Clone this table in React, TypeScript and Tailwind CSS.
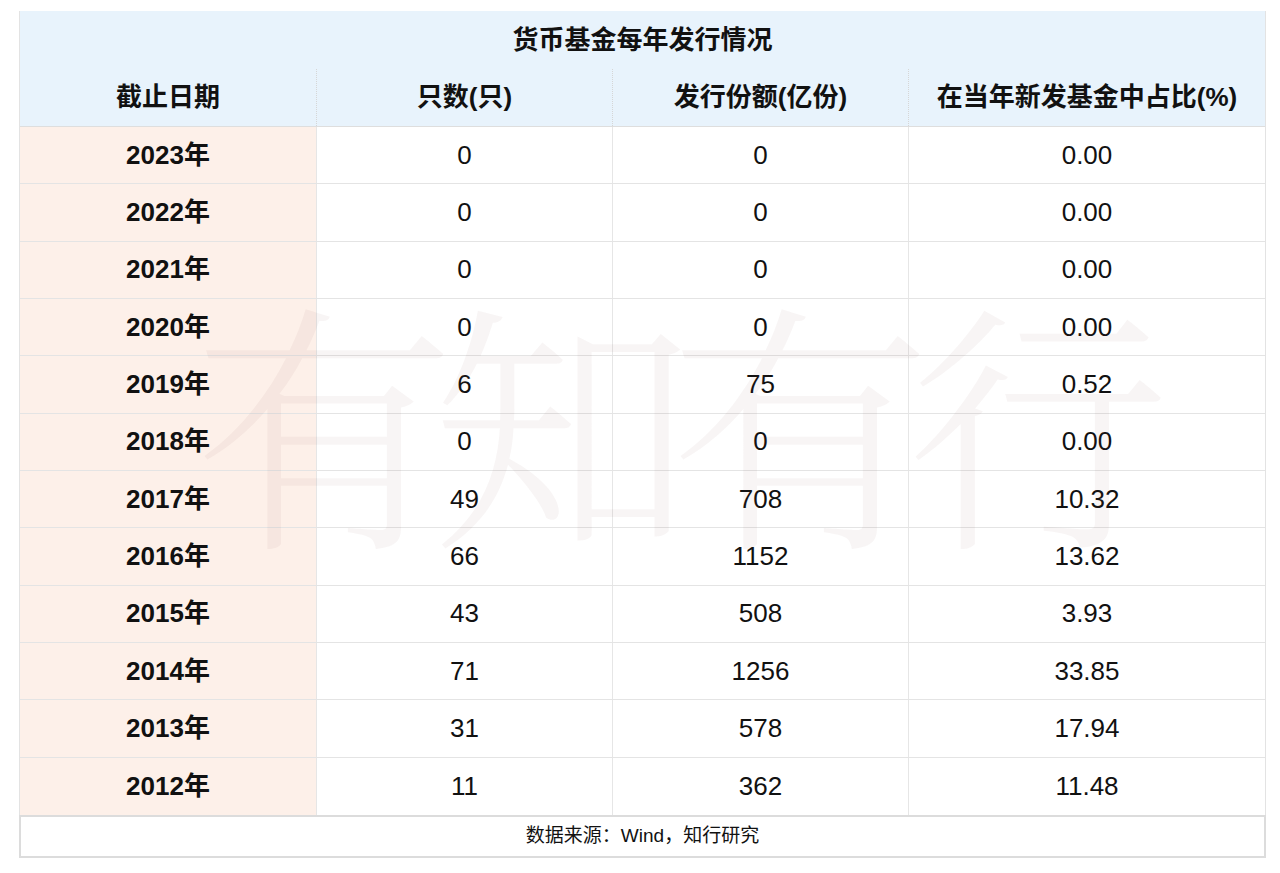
import React from "react";

const rows: [string, string, string, string][] = [
  ["2023年", "0", "0", "0.00"],
  ["2022年", "0", "0", "0.00"],
  ["2021年", "0", "0", "0.00"],
  ["2020年", "0", "0", "0.00"],
  ["2019年", "6", "75", "0.52"],
  ["2018年", "0", "0", "0.00"],
  ["2017年", "49", "708", "10.32"],
  ["2016年", "66", "1152", "13.62"],
  ["2015年", "43", "508", "3.93"],
  ["2014年", "71", "1256", "33.85"],
  ["2013年", "31", "578", "17.94"],
  ["2012年", "11", "362", "11.48"],
];

const font = {
  fontFamily:
    '"Liberation Sans", "Noto Sans CJK SC", sans-serif',
};

export default function App() {
  return (
    <div className="w-[1280px] h-[873px] bg-white pt-[11px] pl-[19px]" style={font}>
      <div className="relative w-[1247px]">
        <div className="border-l border-r border-[#e3e3e3]">
          <div className="h-[58px] bg-[#e8f3fc] flex items-center justify-center text-[26px] font-bold text-[#111] pt-[1px]">
            货币基金每年发行情况
          </div>
          <div className="grid grid-cols-[297px_296px_296px_1fr] h-[58px] bg-[#e8f3fc] border-b border-[#dedede] text-[26px] font-bold text-[#111]">
            <div className="flex items-center justify-center border-r border-dotted border-[#d6d6d6]">截止日期</div>
            <div className="flex items-center justify-center border-r border-dotted border-[#d6d6d6]">只数(只)</div>
            <div className="flex items-center justify-center border-r border-dotted border-[#d6d6d6]">发行份额(亿份)</div>
            <div className="flex items-center justify-center">在当年新发基金中占比(%)</div>
          </div>
          {rows.map((r, i) => (
            <div
              key={i}
              className={`grid grid-cols-[297px_296px_296px_1fr] h-[57.33px] text-[26px] text-[#111] ${
                i < rows.length - 1 ? "border-b border-[#e4e4e4]" : ""
              }`}
            >
              <div className="flex items-center justify-center bg-[#fdf0e9] font-bold border-r border-[#e6e6e6]">{r[0]}</div>
              <div className="flex items-center justify-center border-r border-[#e6e6e6]">{r[1]}</div>
              <div className="flex items-center justify-center border-r border-[#e6e6e6]">{r[2]}</div>
              <div className="flex items-center justify-center">{r[3]}</div>
            </div>
          ))}
        </div>
        <div className="h-[43px] border-2 border-[#dcdcdc] flex items-center justify-center text-[19px] text-[#111]">
          数据来源：Wind，知行研究
        </div>
        <div
          className="pointer-events-none absolute left-[170px] top-[240px] w-[960px] h-[330px] flex items-center justify-center text-[262px] leading-none tracking-[-24px] text-[rgba(120,60,60,0.05)]"
          style={{ fontFamily: '"Noto Serif CJK SC", "Noto Sans CJK SC", serif', fontWeight: 300 }}
        >
          有知有行
        </div>
      </div>
    </div>
  );
}
